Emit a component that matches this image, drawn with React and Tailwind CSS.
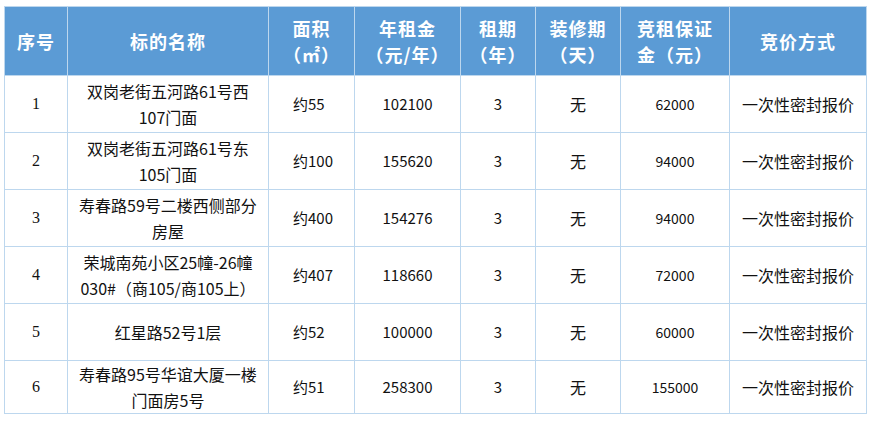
const COLS = [63, 201, 86, 106, 75, 85, 109, 137];

const HEAD = [
  ["序号"],
  ["标的名称"],
  ["面积", "（㎡）"],
  ["年租金", "（元/年）"],
  ["租期", "（年）"],
  ["装修期", "（天）"],
  ["竞租保证", "金（元）"],
  ["竞价方式"],
];

const ROWS = [
  ["1", ["双岗老街五河路61号西", "107门面"], "约55", "102100", "3", "无", "62000"],
  ["2", ["双岗老街五河路61号东", "105门面"], "约100", "155620", "3", "无", "94000"],
  ["3", ["寿春路59号二楼西侧部分", "房屋"], "约400", "154276", "3", "无", "94000"],
  ["4", ["荣城南苑小区25幢-26幢", "030#（商105/商105上）"], "约407", "118660", "3", "无", "72000"],
  ["5", ["红星路52号1层"], "约52", "100000", "3", "无", "60000"],
  ["6", ["寿春路95号华谊大厦一楼", "门面房5号"], "约51", "258300", "3", "无", "155000"],
];

const cell = "border border-[#bdd7ee] text-center text-[#111] p-0";

export default function App() {
  return (
    <div className="w-[870px] h-[423px] bg-white pt-[6px] pl-[4px] font-['Noto_Sans_CJK_SC',sans-serif]">
      <table className="border-collapse table-fixed w-[862px] border border-[#9dc3e6]">
        <colgroup>
          {COLS.map((w, i) => (
            <col key={i} style={{ width: w }} />
          ))}
        </colgroup>
        <thead>
          <tr className="h-[69px] bg-[#5b9bd5]">
            {HEAD.map((h, i) => (
              <th
                key={i}
                className="border border-[#bdd7ee] text-white text-[18px] tracking-[1px] font-bold leading-[26px] text-center p-0"
              >
                {h.map((t, j) => (
                  <div key={j}>{t}</div>
                ))}
              </th>
            ))}
          </tr>
        </thead>
        <tbody>
          {ROWS.map((r, i) => (
            <tr key={i} className={i === 5 ? "h-[52px]" : "h-[57px]"}>
              <td className={`${cell} text-[16px] font-['Liberation_Serif',serif]`}>{r[0]}</td>
              <td className={`${cell} text-[16px] leading-[26px]`}>
                {r[1].map((t, j) => (
                  <div key={j} className="whitespace-nowrap">{t}</div>
                ))}
              </td>
              <td className={`${cell} text-left pl-[24px] text-[15px]`}>{r[2]}</td>
              <td className={`${cell} text-[15px]`}>{r[3]}</td>
              <td className={`${cell} text-[15px]`}>{r[4]}</td>
              <td className={`${cell} text-[16px]`}>{r[5]}</td>
              <td className={`${cell} text-[14px]`}>{r[6]}</td>
              <td className={`${cell} text-[16px]`}>一次性密封报价</td>
            </tr>
          ))}
        </tbody>
      </table>
    </div>
  );
}
